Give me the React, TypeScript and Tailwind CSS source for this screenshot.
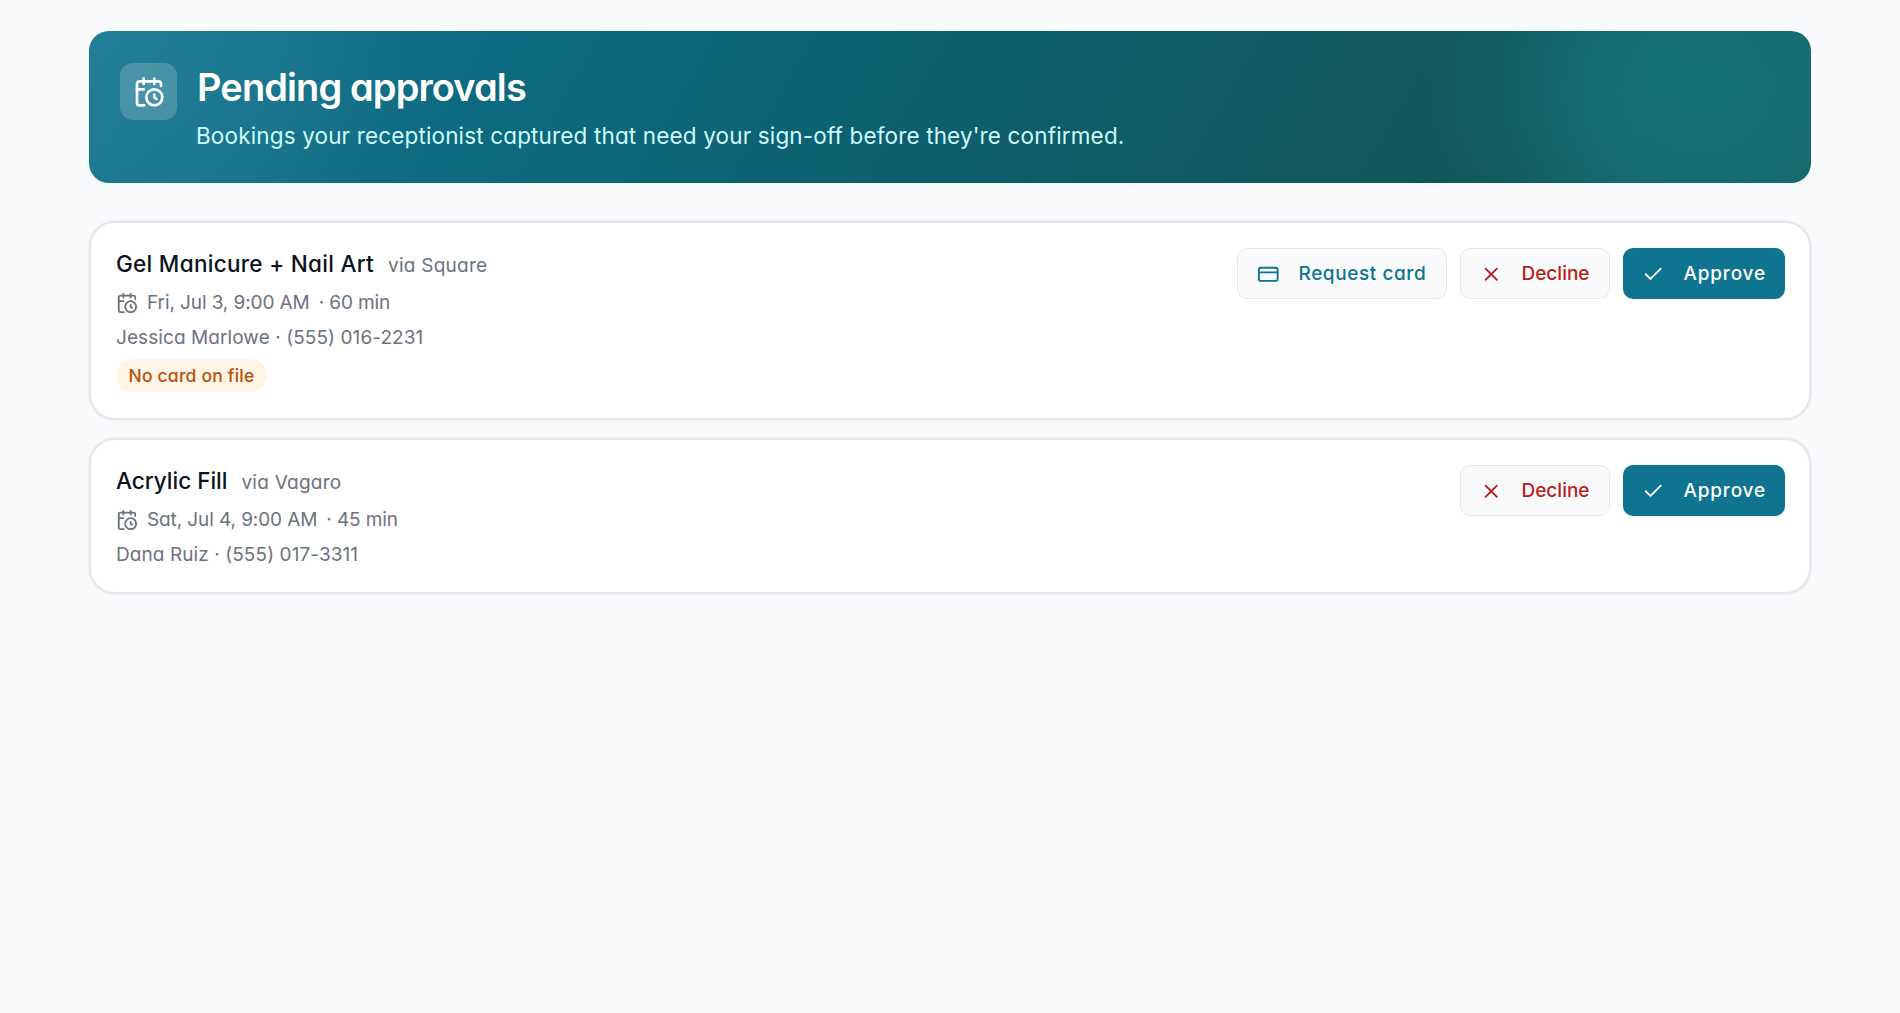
import { CalendarClock, Check, CreditCard, X } from "lucide-react";

interface Booking {
  id: string;
  service: string;
  source: string;
  when: string;
  duration: string;
  customer: string;
  phone: string;
  needsCard: boolean;
}

const bookings: Booking[] = [
  {
    id: "1",
    service: "Gel Manicure + Nail Art",
    source: "Square",
    when: "Fri, Jul 3, 9:00 AM",
    duration: "60 min",
    customer: "Jessica Marlowe",
    phone: "(555) 016-2231",
    needsCard: true,
  },
  {
    id: "2",
    service: "Acrylic Fill",
    source: "Vagaro",
    when: "Sat, Jul 4, 9:00 AM",
    duration: "45 min",
    customer: "Dana Ruiz",
    phone: "(555) 017-3311",
    needsCard: false,
  },
];

function PageHeader() {
  return (
    <header className="flex h-[152px] items-start gap-5 rounded-[20px] bg-[radial-gradient(ellipse_300px_260px_at_95%_45%,rgba(34,211,238,0.25)_0%,rgba(34,211,238,0.22)_35%,rgba(34,211,238,0.08)_75%,transparent_100%),radial-gradient(ellipse_340px_320px_at_1%_10%,rgba(255,255,255,0.08)_0%,rgba(255,255,255,0.07)_30%,transparent_100%),linear-gradient(120deg,#0e7490_0%,#0c6171_45%,#10585b_75%,#134e4a_100%)] pt-8 pl-[31px]">
      <div className="flex size-[57px] shrink-0 items-center justify-center rounded-[13px] bg-white/18 text-white">
        <CalendarClock size={32} strokeWidth={2} />
      </div>
      <div>
        <h1 className="text-[38px] leading-[48px] font-semibold tracking-[-0.9px] text-white">
          Pending approvals
        </h1>
        <p className="mt-[9px] -ml-px text-[22.5px] leading-8 tracking-[0.15px] text-[#cffafe]">
          Bookings your receptionist captured that need your sign-off before they're confirmed.
        </p>
      </div>
    </header>
  );
}

function BookingCard({ booking }: { booking: Booking }) {
  return (
    <article className="flex items-start justify-between rounded-[26px] border-2 border-[#e5e7eb] bg-white pt-[25px] pr-6 pb-5 pl-[25px] shadow-[0_0_3px_rgba(0,0,0,0.1)]">
      <div className="text-[19px] leading-[35px] text-[#6b7280]">
        <div className="-mt-[2px] mb-1 flex h-[35px] items-baseline gap-[14px]">
          <h2
            className={`text-[22.5px] leading-[35px] font-medium text-[#0b1220] ${
              booking.needsCard ? "tracking-[0.29px]" : ""
            }`}
          >
            {booking.service}
          </h2>
          <span className="tracking-[0.24px]">via {booking.source}</span>
        </div>
        <div className="flex items-center gap-[9px] tracking-[-0.1px]">
          <CalendarClock size={22} strokeWidth={2} />
          <span>{booking.when}</span>
          <span>· {booking.duration}</span>
        </div>
        <p className="tracking-[0.08px]">
          {booking.customer} · {booking.phone}
        </p>
        {booking.needsCard && (
          <span className="mt-1 mb-1.5 flex h-[33px] w-fit items-center rounded-full bg-[#fff4e5] px-[12.5px] text-[17.5px] font-medium tracking-[0.2px] text-[#b45309]">
            No card on file
          </span>
        )}
      </div>

      <div className="flex gap-[13px] text-[19px] font-medium">
        {booking.needsCard && (
          <button className="flex h-[51px] w-[210px] items-center gap-[19px] rounded-[10px] border border-[#e5e7eb] bg-[#f9fafb] pt-px pl-[19px] tracking-[0.58px] text-[#0e7490]">
            <CreditCard size={22.5} strokeWidth={2} />
            Request card
          </button>
        )}
        <button className="flex h-[51px] w-[150px] items-center gap-[19px] rounded-[10px] border border-[#e5e7eb] bg-[#f9fafb] pt-px pl-[19px] text-[#b91c1c]">
          <X size={22.5} strokeWidth={2} />
          Decline
        </button>
        <button className="flex h-[51px] w-[162px] items-center gap-[19px] rounded-[10px] bg-[#0e7490] pt-px pl-[19px] tracking-[0.8px] text-white">
          <Check size={22.5} strokeWidth={2} />
          Approve
        </button>
      </div>
    </article>
  );
}

export default function App() {
  return (
    <main className="min-h-screen bg-[#f8fafc] px-[89px] pt-[31px] font-['Inter',sans-serif] [font-feature-settings:'cv11']">
      <PageHeader />
      <section className="mt-[38px] flex flex-col gap-[18px]">
        {bookings.map((booking) => (
          <BookingCard key={booking.id} booking={booking} />
        ))}
      </section>
    </main>
  );
}
